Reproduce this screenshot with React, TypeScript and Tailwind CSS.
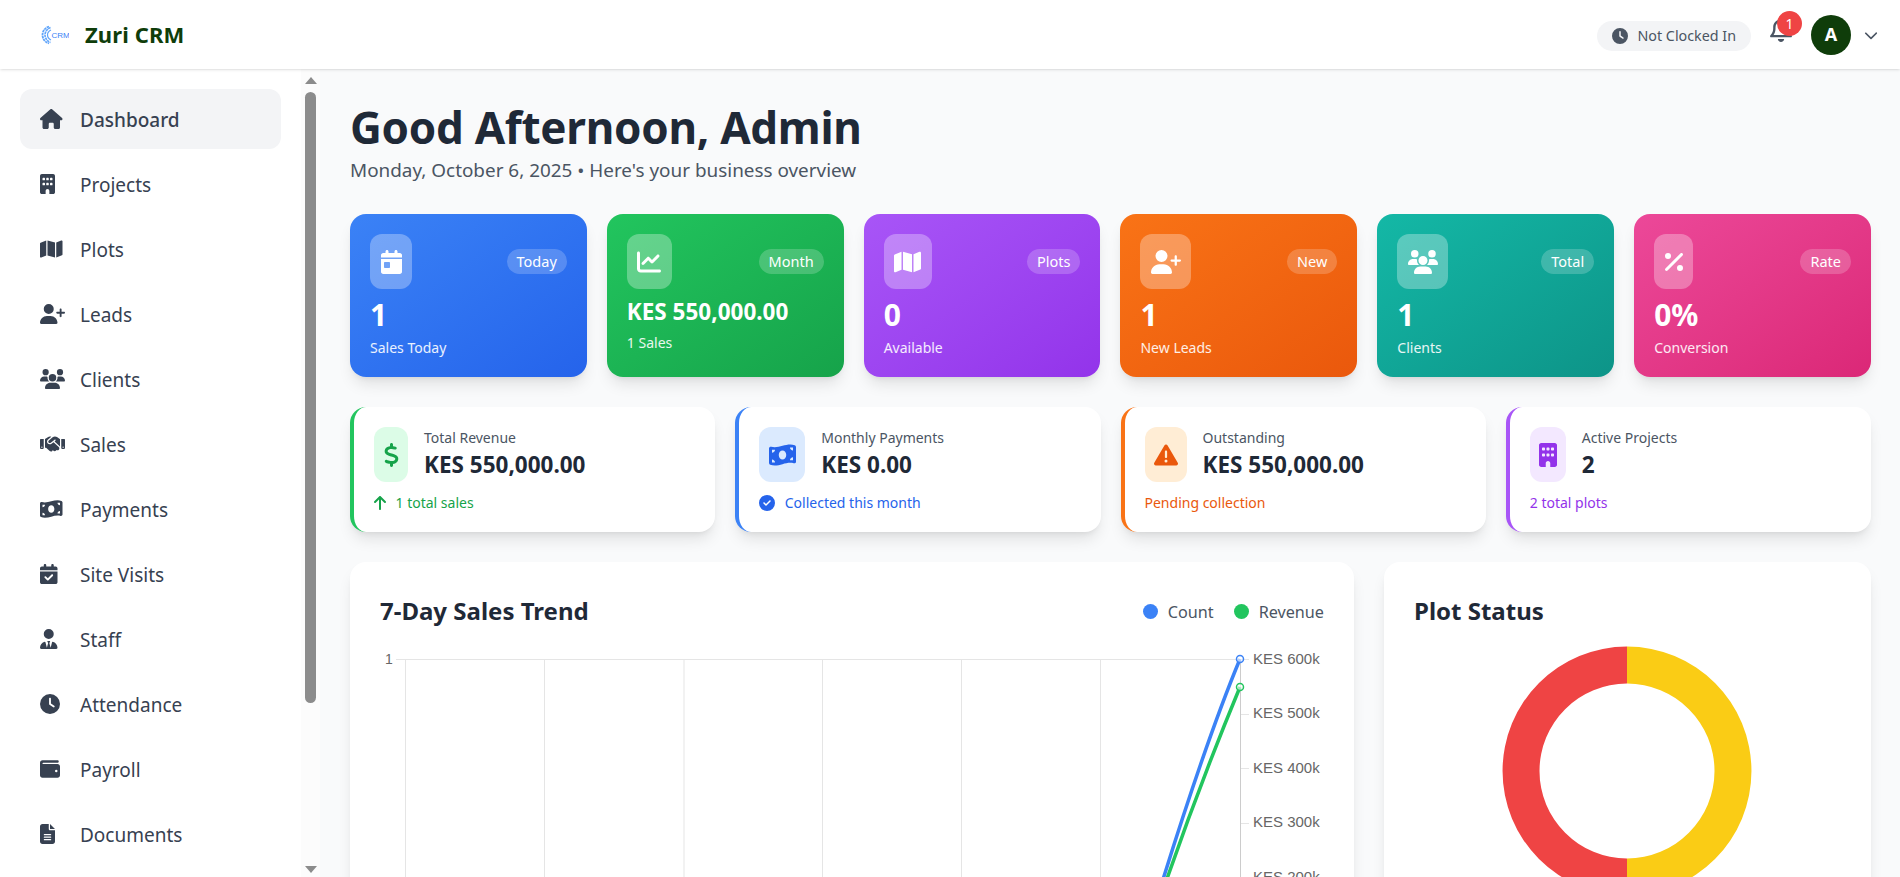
import React from 'react';
import {
  FaHouse, FaBuilding, FaMap, FaUserPlus, FaUsers, FaHandshake, FaMoneyBillWave,
  FaCalendarCheck, FaUserTie, FaClock, FaWallet, FaFileLines, FaCalendarDay,
  FaChartLine, FaPercent, FaDollarSign, FaTriangleExclamation, FaArrowUp,
  FaCircleCheck, FaRegBell, FaChevronDown,
} from 'react-icons/fa6';

// react-icons sets width=1em, so each glyph gets its real width here
const navItems = [
  { label: 'Dashboard', icon: FaHouse, size: 'w-[22.5px]', active: true },
  { label: 'Projects', icon: FaBuilding, size: 'w-[15px]' },
  { label: 'Plots', icon: FaMap, size: 'w-[22.5px]' },
  { label: 'Leads', icon: FaUserPlus, size: 'w-[25px]' },
  { label: 'Clients', icon: FaUsers, size: 'w-[25px]' },
  { label: 'Sales', icon: FaHandshake, size: 'w-[25px]' },
  { label: 'Payments', icon: FaMoneyBillWave, size: 'w-[22.5px]' },
  { label: 'Site Visits', icon: FaCalendarCheck, size: 'w-[17.5px]' },
  { label: 'Staff', icon: FaUserTie, size: 'w-[17.5px]' },
  { label: 'Attendance', icon: FaClock, size: 'w-[20px]' },
  { label: 'Payroll', icon: FaWallet, size: 'w-[20px]' },
  { label: 'Documents', icon: FaFileLines, size: 'w-[15px]' },
];

const statCards = [
  { badge: 'Today', value: '1', label: 'Sales Today', icon: FaCalendarDay, size: 'w-[21px]', bg: 'from-[#3b82f6] to-[#2563eb]' },
  { badge: 'Month', value: 'KES 550,000.00', label: '1 Sales', icon: FaChartLine, size: 'w-[24px]', bg: 'from-[#22c55e] to-[#16a34a]', small: true },
  { badge: 'Plots', value: '0', label: 'Available', icon: FaMap, size: 'w-[27px]', bg: 'from-[#a855f7] to-[#9333ea]' },
  { badge: 'New', value: '1', label: 'New Leads', icon: FaUserPlus, size: 'w-[30px]', bg: 'from-[#f97316] to-[#ea580c]' },
  { badge: 'Total', value: '1', label: 'Clients', icon: FaUsers, size: 'w-[30px]', bg: 'from-[#14b8a6] to-[#0d9488]' },
  { badge: 'Rate', value: '0%', label: 'Conversion', icon: FaPercent, size: 'w-[18px]', bg: 'from-[#ec4899] to-[#db2777]' },
];

const summaryCards = [
  { label: 'Total Revenue', value: 'KES 550,000.00', note: '1 total sales', noteIcon: FaArrowUp, noteSize: 'w-[12px]', icon: FaDollarSign, size: 'w-[15px]', border: 'border-[#22c55e]', tint: 'bg-[#dcfce7]', tone: 'text-[#16a34a]', iconBox: 'w-[34px]' },
  { label: 'Monthly Payments', value: 'KES 0.00', note: 'Collected this month', noteIcon: FaCircleCheck, noteSize: 'w-[16px]', icon: FaMoneyBillWave, size: 'w-[27px]', border: 'border-[#3b82f6]', tint: 'bg-[#dbeafe]', tone: 'text-[#2563eb]', iconBox: 'w-[46px]' },
  { label: 'Outstanding', value: 'KES 550,000.00', note: 'Pending collection', icon: FaTriangleExclamation, size: 'w-[24px]', border: 'border-[#f97316]', tint: 'bg-[#ffedd5]', tone: 'text-[#ea580c]', iconBox: 'w-[42px]' },
  { label: 'Active Projects', value: '2', note: '2 total plots', icon: FaBuilding, size: 'w-[18px]', border: 'border-[#a855f7]', tint: 'bg-[#f3e8ff]', tone: 'text-[#9333ea]', iconBox: 'w-[36px]' },
];

const Logo: React.FC = () => (
  <svg width="28" height="20" viewBox="0 0 28 20" fill="none" className="text-[#3b82f6]">
    <path d="M8 1.5C3.5 3 1.5 6.500 1.500 10s2 7 6.500 8.500" stroke="#60a5fa" strokeWidth="1.800" strokeDasharray="2.500 0.600" />
    <path d="M9.500 2.500C6 4 4 7 4 10s2 6 5.500 7.500" stroke="#60a5fa" strokeWidth="1.600" strokeDasharray="2.500 0.600" />
    <path d="M10 5C8 6 6.500 8 6.500 10s1.500 4 3.500 5" stroke="#60a5fa" strokeWidth="1.200" />
    <text x="10.500" y="13" fontSize="8" fontFamily="Liberation Sans, sans-serif" fill="currentColor">CRM</text>
  </svg>
);

const SalesChart: React.FC = () => {
  const verticals = [25, 164, 303.5, 442, 581, 720];
  const rightTicks = [
    { y: 19, text: 19, label: 'KES 600k' },
    { y: 74, text: 73, label: 'KES 500k' },
    { y: 128, text: 128, label: 'KES 400k' },
    { y: 183, text: 182, label: 'KES 300k' },
    { y: 237, text: 237, label: 'KES 200k' },
  ];
  return (
    <svg width="944" height="300" viewBox="0 0 944 300" className="mt-[8px]">
      {verticals.map((x) => (
        <line key={x} x1={x + 0.5} y1="19" x2={x + 0.5} y2="300" stroke="#e5e5e5" />
      ))}
      <line x1="860.5" y1="19" x2="860.5" y2="300" stroke="#cccccc" />
      <line x1="16" y1="19.5" x2="869" y2="19.5" stroke="#e5e5e5" />
      {rightTicks.map((t) => (
        <g key={t.label}>
          <line x1="861" y1={t.y + 0.5} x2="869" y2={t.y + 0.5} stroke="#e5e5e5" />
          <text x="873" y={t.text + 5} fontSize="15" fill="#666666" fontFamily="Liberation Sans, sans-serif">{t.label}</text>
        </g>
      ))}
      <text x="5" y="24" fontSize="14" fill="#666666" fontFamily="Liberation Sans, sans-serif">1</text>
      <path d="M860 19C838 72 812 145 776 262" stroke="#3b82f6" strokeWidth="3.500" fill="none" />
      <path d="M860 47C843 88 812 165 779 262" stroke="#22c55e" strokeWidth="3.500" fill="none" />
      <circle cx="860" cy="19" r="3.500" fill="#ffffff" fillOpacity="0.6" stroke="#3b82f6" strokeWidth="1.500" />
      <circle cx="860" cy="47" r="3.500" fill="#ffffff" fillOpacity="0.6" stroke="#22c55e" strokeWidth="1.500" />
    </svg>
  );
};

const App: React.FC = () => {
  return (
    <div className="h-screen flex flex-col overflow-hidden bg-[#f9fafb] font-['Noto_Sans',sans-serif] text-[#1f2937]">
      <header className="relative z-10 h-[69px] shrink-0 bg-white shadow-sm flex items-center justify-between pl-[41px] pr-[22px]">
        <div className="flex items-center gap-[16px]">
          <Logo />
          <h1 className="text-[22px] tracking-[0.1px] font-bold text-[#0f3d0a]">Zuri CRM</h1>
        </div>
        <div className="flex items-center">
          <div className="h-[30px] mt-[2px] flex items-center gap-[9px] rounded-full bg-[#f3f4f6] pl-[15px] pr-[15px] text-[14.3px] text-[#4b5563]">
            <FaClock className="w-[16px] h-[16px]" />
            <span>Not Clocked In</span>
          </div>
          <div className="relative ml-[19px] mr-[19px] mb-[10px]">
            <FaRegBell className="w-[22px] h-[25px] text-[#4b5563]" />
            <span className="absolute -top-[6px] left-[7px] w-[25px] h-[25px] rounded-full bg-[#ef4444] text-white text-[14px] flex items-center justify-center">1</span>
          </div>
          <div className="w-[40px] h-[40px] rounded-full bg-[#0f3d0a] text-white font-bold text-[18px] flex items-center justify-center">A</div>
          <FaChevronDown className="ml-[13px] w-[14px] h-[14px] text-[#4b5563]" />
        </div>
      </header>

      <div className="flex flex-1 min-h-0">
        <aside className="relative w-[320px] shrink-0 bg-white overflow-hidden">
          <nav className="pt-[20px] pl-[20px] w-[281px] flex flex-col gap-[5px]">
            {navItems.map((item) => (
              <div
                key={item.label}
                className={`h-[60px] shrink-0 flex items-center pl-[20px] rounded-xl text-[19px] text-[#374151] ${item.active ? 'bg-[#f3f4f6] font-medium' : ''}`}
              >
                <span className="w-[40px] shrink-0">
                  <item.icon className={`h-[20px] ${item.size}`} />
                </span>
                <span className="mt-[2px]">{item.label}</span>
              </div>
            ))}
          </nav>
          {/* sidebar scrollbar */}
          <div className="absolute top-0 bottom-0 right-0 w-[19px] bg-[#fcfcfc]">
            <div className="absolute top-[8px] left-[4px] w-0 h-0 border-x-[6px] border-x-transparent border-b-[7px] border-b-[#8c8c8c]" />
            <div className="absolute top-[23px] left-[4px] w-[11px] h-[611px] rounded-full bg-[#8c8c8c]" />
            <div className="absolute bottom-[4px] left-[4px] w-0 h-0 border-x-[6px] border-x-transparent border-t-[7px] border-t-[#8c8c8c]" />
          </div>
        </aside>

        <main className="flex-1 min-w-0 overflow-hidden pl-[30px] pr-[29px] pt-[28px]">
          <h2 className="text-[44px] leading-[60px] tracking-[-0.29px] font-bold text-[#1f2937]">Good Afternoon, Admin</h2>
          <p className="text-[18.9px] leading-[28px] text-[#4b5563] -mt-[1px]">Monday, October 6, 2025 • Here's your business overview</p>

          <div className="grid grid-cols-6 gap-[20px] mt-[30px]">
            {statCards.map((card) => (
              <div key={card.badge} className={`h-[163px] rounded-2xl p-[20px] text-white shadow-lg bg-linear-to-br ${card.bg}`}>
                <div className="flex items-center justify-between">
                  <div className="h-[55px] px-[10.5px] rounded-xl bg-white/30 flex items-center justify-center">
                    <card.icon className={`h-[24px] ${card.size}`} />
                  </div>
                  <span className="h-[25px] px-[10px] rounded-full bg-white/20 text-[14.5px] flex items-center">{card.badge}</span>
                </div>
                <div className={`font-bold ${card.small ? 'mt-[7px] text-[22.5px] leading-[32px]' : 'mt-[6px] text-[30px] leading-[40px]'}`}>{card.value}</div>
                <div className={`text-[14px] leading-[20px] text-white/90 ${card.small ? 'mt-[5px]' : 'mt-[3px]'}`}>{card.label}</div>
              </div>
            ))}
          </div>

          <div className="grid grid-cols-4 gap-[20px] mt-[30px]">
            {summaryCards.map((card) => (
              <div key={card.label} className={`h-[125px] rounded-2xl bg-white border-l-4 ${card.border} pl-[20px] pt-[20px] shadow-lg`}>
                <div className="flex items-center gap-[16px]">
                  <div className={`h-[55px] ${card.iconBox} rounded-xl ${card.tint} ${card.tone} flex items-center justify-center`}>
                    <card.icon className={`h-[24px] ${card.size}`} />
                  </div>
                  <div className="-mt-[1px]">
                    <div className="text-[14px] leading-[20px] text-[#4b5563]">{card.label}</div>
                    <div className="text-[22.5px] leading-[32px] mt-[1px] font-bold text-[#1f2937]">{card.value}</div>
                  </div>
                </div>
                <div className={`flex items-center gap-[9.5px] mt-[11px] text-[14px] leading-[20px] ${card.tone}`}>
                  {card.noteIcon && <card.noteIcon className={`h-[16px] ${card.noteSize}`} />}
                  <span>{card.note}</span>
                </div>
              </div>
            ))}
          </div>

          <div className="grid grid-cols-[1fr_487px] gap-[30px] mt-[30px]">
            <section className="h-[420px] rounded-2xl bg-white shadow-lg p-[30px]">
              <div className="flex items-center justify-between h-[40px]">
                <h3 className="text-[24px] font-bold text-[#1f2937] -mt-[2px]">7-Day Sales Trend</h3>
                <div className="flex items-center gap-[20px] text-[16.2px] text-[#4b5563]">
                  <div className="flex items-center gap-[10px]">
                    <span className="w-[15px] h-[15px] rounded-full bg-[#3b82f6]" />
                    <span>Count</span>
                  </div>
                  <div className="flex items-center gap-[10px]">
                    <span className="w-[15px] h-[15px] rounded-full bg-[#22c55e]" />
                    <span>Revenue</span>
                  </div>
                </div>
              </div>
              <SalesChart />
            </section>
            <section className="h-[420px] rounded-2xl bg-white shadow-lg p-[30px]">
              <div className="flex items-center h-[40px]">
                <h3 className="text-[24px] font-bold text-[#1f2937] -mt-[2px]">Plot Status</h3>
              </div>
              <div className="flex justify-center mt-[14px] pr-[2px]">
                <svg width="250" height="250" viewBox="0 0 250 250">
                  <path d="M125 .5a124.500 124.500 0 0 1 0 249v-37a87.500 87.500 0 0 0 0-175z" fill="#facc15" />
                  <path d="M125 .5a124.500 124.500 0 0 0 0 249v-37a87.500 87.500 0 0 1 0-175z" fill="#ef4444" />
                </svg>
              </div>
            </section>
          </div>
        </main>
      </div>
    </div>
  );
};

export default App;
